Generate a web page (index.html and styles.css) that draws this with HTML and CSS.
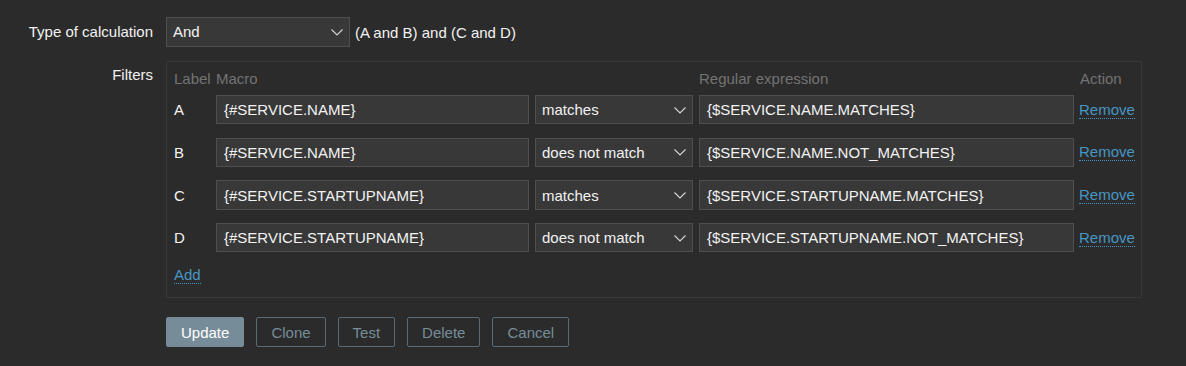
FILE: index.html
```html
<!DOCTYPE html>
<html lang="en">
<head>
<meta charset="utf-8">
<title>Filters</title>
<link rel="stylesheet" href="styles.css">
</head>
<body>
<form class="form">
  <div class="form-row calc-row">
    <label class="form-label">Type of calculation</label>
    <div class="form-field calc-field">
      <div class="select select-calc"><span>And</span><svg class="chev" viewBox="0 0 12 7" width="12" height="7"><path d="M0.5 0.5 L6 6 L11.5 0.5" fill="none" stroke="#d6d6d6" stroke-width="1.1"/></svg></div>
      <span class="calc-formula">(A and B) and (C and D)</span>
    </div>
  </div>
  <div class="form-row filters-row">
    <label class="form-label filters-label">Filters</label>
    <div class="filter-box">
      <div class="fgrid fhead">
        <span>Label</span><span>Macro</span><span></span><span>Regular expression</span><span>Action</span>
      </div>
      <div class="frows">
        <div class="fgrid frow">
          <span class="lbl">A</span>
          <div class="input macro">{#SERVICE.NAME}</div>
          <div class="select op"><span>matches</span><svg class="chev" viewBox="0 0 12 7" width="12" height="7"><path d="M0.5 0.5 L6 6 L11.5 0.5" fill="none" stroke="#d6d6d6" stroke-width="1.1"/></svg></div>
          <div class="input regex">{$SERVICE.NAME.MATCHES}</div>
          <a class="link">Remove</a>
        </div>
        <div class="fgrid frow">
          <span class="lbl">B</span>
          <div class="input macro">{#SERVICE.NAME}</div>
          <div class="select op"><span>does not match</span><svg class="chev" viewBox="0 0 12 7" width="12" height="7"><path d="M0.5 0.5 L6 6 L11.5 0.5" fill="none" stroke="#d6d6d6" stroke-width="1.1"/></svg></div>
          <div class="input regex">{$SERVICE.NAME.NOT_MATCHES}</div>
          <a class="link">Remove</a>
        </div>
        <div class="fgrid frow">
          <span class="lbl">C</span>
          <div class="input macro">{#SERVICE.STARTUPNAME}</div>
          <div class="select op"><span>matches</span><svg class="chev" viewBox="0 0 12 7" width="12" height="7"><path d="M0.5 0.5 L6 6 L11.5 0.5" fill="none" stroke="#d6d6d6" stroke-width="1.1"/></svg></div>
          <div class="input regex">{$SERVICE.STARTUPNAME.MATCHES}</div>
          <a class="link">Remove</a>
        </div>
        <div class="fgrid frow">
          <span class="lbl">D</span>
          <div class="input macro">{#SERVICE.STARTUPNAME}</div>
          <div class="select op"><span>does not match</span><svg class="chev" viewBox="0 0 12 7" width="12" height="7"><path d="M0.5 0.5 L6 6 L11.5 0.5" fill="none" stroke="#d6d6d6" stroke-width="1.1"/></svg></div>
          <div class="input regex">{$SERVICE.STARTUPNAME.NOT_MATCHES}</div>
          <a class="link">Remove</a>
        </div>
      </div>
      <div class="add-row"><a class="link">Add</a></div>
    </div>
  </div>
  <div class="form-row buttons-row">
    <span></span>
    <div class="buttons">
      <button type="button" class="btn btn-primary">Update</button>
      <button type="button" class="btn btn-alt">Clone</button>
      <button type="button" class="btn btn-alt">Test</button>
      <button type="button" class="btn btn-alt">Delete</button>
      <button type="button" class="btn btn-alt">Cancel</button>
    </div>
  </div>
</form>
</body>
</html>
```
FILE: styles.css
```css
* { box-sizing: border-box; }
html, body { margin: 0; padding: 0; }
body {
  background: #2b2b2b;
  color: #f2f2f2;
  font-family: "Liberation Sans", Arial, sans-serif;
  font-size: 15px;
  width: 1186px;
  height: 366px;
  overflow: hidden;
}
.form { padding-top: 17px; }
.form-row {
  display: grid;
  grid-template-columns: 153px 1fr;
  column-gap: 13px;
}
.form-label {
  text-align: right;
  color: #f2f2f2;
}
.calc-row .form-label { line-height: 30px; }
.calc-field { display: flex; align-items: center; gap: 5px; }
.select, .input {
  height: 29.4px;
  background: #383838;
  border: 1px solid #4f4f4f;
  color: #f2f2f2;
  display: flex;
  align-items: center;
  white-space: nowrap;
}
.select { justify-content: space-between; padding: 0 6px 0 6px; }
.input { padding: 0 7px; }
.select-calc { width: 184px; }
.chev { display: block; margin-top: 1px; }
.calc-formula { color: #f2f2f2; }

.filters-row { margin-top: 14px; }
.filters-label { padding-top: 5px; }
.filter-box {
  width: 976px;
  border: 1px solid #383838;
  padding: 0 6px 14px 7px;
}
.fgrid {
  display: grid;
  grid-template-columns: 42px 319px 164px 380px 1fr;
  align-items: center;
}
.fhead { height: 33px; color: #737373; }
.fhead span:last-child { padding-left: 1px; }
.frows { display: flex; flex-direction: column; gap: 13.27px; }
.frow { height: 29.4px; }
.macro { width: 313px; }
.op { width: 158px; }
.regex { width: 375px; }
.lbl { color: #f2f2f2; }
.link {
  color: #4796c4;
  border-bottom: 1px dotted #4796c4;
  cursor: pointer;
  justify-self: start;
  line-height: normal;
}
.add-row { margin-top: 14px; line-height: normal; }

.buttons-row { margin-top: 19px; }
.buttons { display: flex; gap: 12px; }
.btn {
  font-family: inherit;
  font-size: 15px;
  height: 29.5px;
  padding: 0 14px;
  border-radius: 2px;
  cursor: pointer;
}
.btn-primary {
  background: #768d99;
  border: 1px solid #768d99;
  color: #ffffff;
}
.btn-alt {
  background: transparent;
  border: 1px solid #596b76;
  color: #768d99;
}
```
